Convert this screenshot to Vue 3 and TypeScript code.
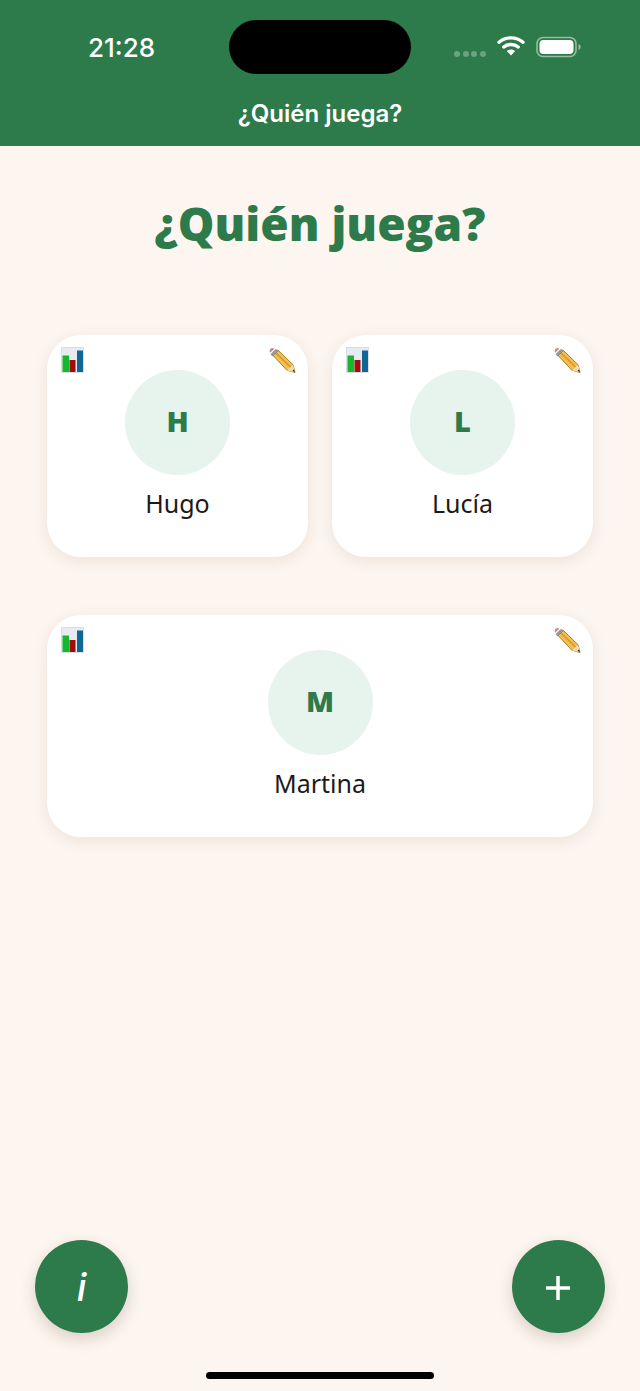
<script setup lang="ts">
interface Player {
  name: string
  wide?: boolean
}

const players: Player[] = [
  { name: 'Hugo' },
  { name: 'Lucía' },
  { name: 'Martina', wide: true }
]
</script>

<template>
  <div class="page">
    <header class="topbar">
      <div class="status">
        <span class="time">21:28</span>
        <div class="island"></div>
        <div class="status-icons">
          <div class="dots"><i></i><i></i><i></i><i></i></div>
          <svg class="wifi" width="28" height="21" viewBox="0 0 28 21">
            <path d="M2 7.200C8.800 1.400 19.200 1.400 26 7.200" fill="none" stroke="#fff" stroke-width="3.400" stroke-linecap="round" />
            <path d="M6.800 12C10.800 8.600 17.200 8.600 21.200 12" fill="none" stroke="#fff" stroke-width="3.400" stroke-linecap="round" />
            <path d="M14 20.500 9.800 16C12.200 13.900 15.800 13.900 18.200 16Z" fill="#fff" />
          </svg>
          <svg class="battery" width="46" height="22" viewBox="0 0 46 22">
            <rect x="1" y="1.500" width="39" height="19" rx="6" fill="none" stroke="#fff" stroke-opacity=".5" stroke-width="1.600" />
            <rect x="3.500" y="4" width="34" height="14" rx="4" fill="#fff" />
            <path d="M42.500 8v6c1.400-.5 2.200-1.700 2.200-3s-.8-2.500-2.200-3Z" fill="#fff" fill-opacity=".5" />
          </svg>
        </div>
      </div>
      <div class="bar-title">¿Quién juega?</div>
    </header>

    <main class="content">
      <h1 class="heading">¿Quién juega?</h1>
      <div class="grid">
        <div v-for="p in players" :key="p.name" class="card" :class="{ wide: p.wide }">
          <svg class="stats" width="23" height="26" viewBox="0 0 23 26">
            <rect x=".5" y=".5" width="22" height="25" fill="#e6ebef" stroke="#d3dadf" stroke-width=".8" />
            <rect x="1.500" y="8.500" width="6.500" height="16.500" fill="#14b82c" />
            <rect x="8.500" y="13" width="6" height="12" fill="#a30c0c" />
            <rect x="16" y="3.500" width="6" height="21.500" fill="#0f6796" />
          </svg>
          <svg class="pencil" width="27" height="27" viewBox="0 0 28 27">
            <path d="M4 8 9 2.500 25 18 27 26 18.500 23.500Z" fill="#f3c04f" stroke="#a87a24" stroke-width="1" stroke-linejoin="round" />
            <path d="M7 5.500 23 21" stroke="#d99a2e" stroke-width="1.800" fill="none" />
            <path d="M18.500 23.500 25 18 27 26Z" fill="#f2dcb0" />
            <path d="M24.300 24.200 25.900 22.800 27 26Z" fill="#222" />
            <path d="M2 7 7 2 9.500 3.500 4 9Z" fill="#9a9a9a" stroke="#777" stroke-width=".6" />
            <path d="M1.200 5.500 5.500 1.200C4 0 2.600 .300 1.600 1.300.600 2.400.300 4 1.200 5.500Z" fill="#c98a86" />
          </svg>
          <div class="avatar">{{ p.name[0] }}</div>
          <div class="name">{{ p.name }}</div>
        </div>
      </div>
    </main>

    <footer class="fabs">
      <button class="fab info">i</button>
      <button class="fab add">
        <svg width="24" height="24" viewBox="0 0 24 24">
          <path d="M12 0v24M0 12h24" stroke="#fff" stroke-width="3.500" />
        </svg>
      </button>
    </footer>
    <div class="home-row"><div class="home-bar"></div></div>
  </div>
</template>

<style>
html, body { margin: 0; padding: 0; }
</style>

<style scoped>
.page {
  width: 640px;
  height: 1391px;
  display: flex;
  flex-direction: column;
  background: #fdf5ef;
  font-family: "Noto Sans", "Liberation Sans", sans-serif;
  overflow: hidden;
}

.topbar {
  height: 146px;
  flex-shrink: 0;
  background: #2d7a4a;
  color: #fff;
  display: flex;
  flex-direction: column;
}

.status {
  height: 96px;
  box-sizing: border-box;
  padding-top: 20px;
  display: flex;
  align-items: flex-start;
}

.time {
  width: 229px;
  padding-left: 14px;
  box-sizing: border-box;
  text-align: center;
  margin-top: 12px;
  font: 500 26px/32px Inter, sans-serif;
}

.island {
  width: 182px;
  height: 54px;
  border-radius: 27px;
  background: #000;
}

.status-icons {
  margin-left: 43px;
  display: flex;
  align-items: center;
  height: 54px;
}

.dots {
  display: flex;
  gap: 2.500px;
  margin-top: 13px;
  margin-right: 11px;
}

.dots i {
  width: 6px;
  height: 6px;
  border-radius: 50%;
  background: rgba(255, 255, 255, 0.3);
}

.wifi { margin-top: -4px; margin-right: 11px; }

.bar-title {
  text-align: center;
  font: 600 24px/36px Inter, sans-serif;
}

.content {
  flex: 1;
  padding: 0 47px;
}

.heading {
  margin: 44px 0 0;
  text-align: center;
  font: 800 46px/66px "Open Sans", sans-serif;
  color: #2d7a4a;
}

.grid {
  margin-top: 79px;
  display: grid;
  grid-template-columns: 261px 261px;
  column-gap: 24px;
  row-gap: 58px;
}

.card {
  position: relative;
  height: 222px;
  box-sizing: border-box;
  padding-top: 35px;
  background: #fff;
  border-radius: 34px;
  box-shadow: 0 4px 16px rgba(60, 40, 20, 0.09);
  display: flex;
  flex-direction: column;
  align-items: center;
}

.card.wide { grid-column: span 2; }

.stats { position: absolute; left: 14px; top: 12px; }
.pencil { position: absolute; right: 12px; top: 12px; }

.avatar {
  width: 105px;
  height: 105px;
  padding-bottom: 4px;
  box-sizing: border-box;
  border-radius: 50%;
  background: #e7f3ed;
  color: #2d7a4a;
  display: flex;
  align-items: center;
  justify-content: center;
  font: 800 29px/1 "Open Sans", sans-serif;
}

.name {
  margin-top: 11px;
  font: 400 25px/34px "Noto Sans", sans-serif;
  color: #1e1a17;
}

.fabs {
  display: flex;
  justify-content: space-between;
  padding: 0 35px;
}

.fab {
  width: 93px;
  height: 93px;
  border: 0;
  padding: 0;
  border-radius: 50%;
  background: #2d7a4a;
  color: #fff;
  box-shadow: 0 6px 16px rgba(60, 40, 20, 0.18);
  display: flex;
  align-items: center;
  justify-content: center;
}

.add svg { margin-top: 3px; margin-left: -1px; }

.info {
  font: italic 500 38px/1 Inter, sans-serif;
}

.home-row {
  height: 58px;
  padding-top: 39px;
  box-sizing: border-box;
  display: flex;
  justify-content: center;
}

.home-bar {
  width: 228px;
  height: 7px;
  border-radius: 4px;
  background: #000;
}
</style>
